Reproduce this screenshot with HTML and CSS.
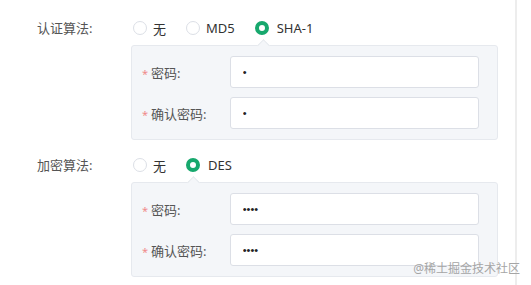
FILE: index.html
```html
<!DOCTYPE html>
<html lang="zh-CN">

<head>
    <meta charset="UTF-8">
    <title>算法设置</title>
    <link rel="stylesheet" href="styles.css">
</head>

<body>
    <div class="page">
        <!-- 认证算法 -->
        <div class="formRow">
            <div class="rowLabel">认证算法:</div>
            <div class="rowBody">
                <div class="radioGroup">
                    <label class="radioItem"><span class="radio"></span>无</label>
                    <label class="radioItem"><span class="radio"></span>MD5</label>
                    <label class="radioItem"><span class="radio checked"></span>SHA-1</label>
                </div>
                <div class="subPanel arrowThird">
                    <div class="field">
                        <span class="fieldLabel"><i>*</i>密码:</span>
                        <input type="password" class="pwdInput" value="a">
                    </div>
                    <div class="field">
                        <span class="fieldLabel"><i>*</i>确认密码:</span>
                        <input type="password" class="pwdInput" value="a">
                    </div>
                </div>
            </div>
        </div>

        <!-- 加密算法 -->
        <div class="formRow">
            <div class="rowLabel">加密算法:</div>
            <div class="rowBody">
                <div class="radioGroup">
                    <label class="radioItem"><span class="radio"></span>无</label>
                    <label class="radioItem"><span class="radio checked"></span>DES</label>
                </div>
                <div class="subPanel arrowSecond">
                    <div class="field">
                        <span class="fieldLabel"><i>*</i>密码:</span>
                        <input type="password" class="pwdInput" value="abcd">
                    </div>
                    <div class="field">
                        <span class="fieldLabel"><i>*</i>确认密码:</span>
                        <input type="password" class="pwdInput" value="abcd">
                    </div>
                </div>
            </div>
        </div>

        <div class="watermark">@稀土掘金技术社区</div>
    </div>
</body>

</html>
```

FILE: styles.css
```css
body {
    margin: 0;
    background: #fff;
    font-family: "Noto Sans", "Noto Sans CJK SC", sans-serif;
    font-size: 13px;
    color: #333;
}

.page {
    position: relative;
    width: 517px;
    height: 285px;
    box-sizing: border-box;
    padding-top: 17px;
    border-right: 2px solid #ededed;
}

.formRow {
    display: flex;
    align-items: flex-start;
    margin-bottom: 14px;
}

.rowLabel {
    width: 131px;
    box-sizing: border-box;
    padding-left: 37px;
    line-height: 22px;
    color: #555;
}

.rowBody {
    display: flex;
    flex-direction: column;
}

.radioGroup {
    display: flex;
    align-items: center;
    height: 22px;
    padding-left: 2px;
}

.radioItem {
    display: flex;
    align-items: center;
    margin-right: 20px;
    color: #333;
}

.radio {
    width: 14px;
    height: 14px;
    box-sizing: border-box;
    border: 1px solid #dcdfe6;
    border-radius: 50%;
    background: #fff;
    margin-right: 6px;
}

.radio.checked {
    border: 4px solid #17a86d;
    margin-right: 8px;
}

.subPanel {
    position: relative;
    margin-top: 6px;
    width: 367px;
    box-sizing: border-box;
    padding: 10px 18px 10px 10px;
    background: #f4f6f9;
    border: 1px solid #e6e9ee;
    border-radius: 3px;
    display: flex;
    flex-direction: column;
    gap: 9px;
}

/* little arrow pointing at the checked radio */
.subPanel::before {
    content: "";
    position: absolute;
    top: -5px;
    width: 8px;
    height: 8px;
    background: #f4f6f9;
    border-top: 1px solid #e6e9ee;
    border-left: 1px solid #e6e9ee;
    transform: rotate(45deg);
}

.arrowThird::before {
    left: 127px;
}

.arrowSecond::before {
    left: 57px;
}

.field {
    display: flex;
    align-items: center;
}

.fieldLabel {
    width: 88px;
    color: #555;
}

.fieldLabel i {
    font-style: normal;
    font-size: 11px;
    color: #f08a8a;
    margin-right: 3px;
}

.pwdInput {
    width: 250px;
    height: 32px;
    box-sizing: border-box;
    padding: 0 12px;
    border: 1px solid #dcdfe6;
    border-radius: 3px;
    background: #fff;
    font-size: 11px;
    color: #222;
    outline: none;
}

.watermark {
    position: absolute;
    right: -5px;
    bottom: 8px;
    font-size: 12px;
    color: #a5a5a5;
}
```
